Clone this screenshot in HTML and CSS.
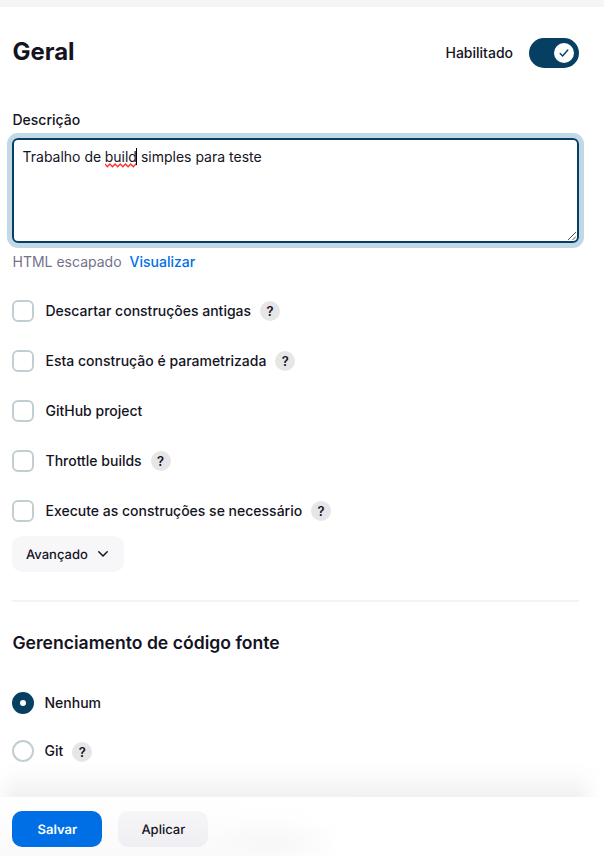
FILE: index.html
```html
<!DOCTYPE html>
<html lang="pt-BR">
<head>
<meta charset="utf-8">
<title>Geral</title>
<link rel="stylesheet" href="styles.css">
</head>
<body>
<main class="page">
  <header class="head">
    <h1>Geral</h1>
    <div class="toggle-label"><span>Habilitado</span>
      <span class="toggle"><span class="knob"><svg width="12" height="12" viewBox="0 0 12 12"><path d="M2.2 6.6 4.6 9 9.8 3" fill="none" stroke="#063f61" stroke-width="1.4" stroke-linecap="round" stroke-linejoin="round"/></svg></span></span>
    </div>
  </header>
  <div class="field-label">Descrição</div>
  <div class="textarea">Trabalho de <span class="misspelt">build<svg class="squiggle" width="32" height="5" viewBox="0 0 32 5"><path d="M0 1 2.3 3.8 4.9 1 7.5 3.8 10.1 1 12.7 3.8 15.3 1 17.9 3.8 20.5 1 23.1 3.8 25.7 1 28.3 3.8 30.9 1 32 2" fill="none" stroke="#ff3030" stroke-width="1.3"/></svg><i class="caret"></i></span> simples para teste
    <svg class="grip" width="8" height="8" viewBox="0 0 8 8"><path d="M0 8 8 0M4.5 8 8 4.5" fill="none" stroke="#555" stroke-width="1"/></svg>
  </div>
  <div class="preview"><span>HTML escapado</span><a>Visualizar</a></div>
  <div class="options">
    <div class="option"><span class="box"></span><span>Descartar construções antigas</span><span class="help">?</span></div>
    <div class="option"><span class="box"></span><span>Esta construção é parametrizada</span><span class="help">?</span></div>
    <div class="option"><span class="box"></span><span>GitHub project</span></div>
    <div class="option"><span class="box"></span><span>Throttle builds</span><span class="help">?</span></div>
    <div class="option"><span class="box"></span><span>Execute as construções se necessário</span><span class="help">?</span></div>
  </div>
  <div class="advanced"><span>Avançado</span><svg width="10" height="6" viewBox="0 0 10 6"><path d="M.8.8 5 5 9.2.8" fill="none" stroke="#14141f" stroke-width="1.5" stroke-linecap="round" stroke-linejoin="round"/></svg></div>
  <section class="scm">
    <h2>Gerenciamento de código fonte</h2>
    <div class="choice"><span class="radio checked"></span><span>Nenhum</span></div>
    <div class="choice"><span class="radio"></span><span>Git</span><span class="help low">?</span></div>
  </section>
</main>
<footer class="actions"><div class="btn save">Salvar</div><div class="btn apply">Aplicar</div></footer>
</body>
</html>
```
FILE: styles.css
```css
* { box-sizing: border-box; }
body {
  margin: 0;
  height: 856px;
  overflow: hidden;
  display: flex;
  flex-direction: column;
  background: #fff;
  color: #14141f;
  font: 500 14px/20px Inter, "Liberation Sans", sans-serif;
}
svg { display: block; }
.page { height: 797px; flex: none; padding: 0 25px 0 12px; border-top: 7px solid #f5f5f7; }
.head { display: flex; justify-content: space-between; align-items: center; height: 30px; margin-top: 31px; }
h1 { margin: 0; font-size: 24px; font-weight: 700; line-height: 28px; padding: 0 0 2px .4px; }
.toggle-label { display: flex; align-items: center; gap: 16px; }
.toggle { width: 50px; height: 30px; padding: 5px; border-radius: 15px; background: #063f61; display: flex; justify-content: flex-end; }
.knob { width: 20px; height: 20px; border-radius: 50%; background: #fff; display: flex; align-items: center; justify-content: center; }
.field-label { margin-top: 42px; padding-left: .5px; }
.textarea {
  position: relative;
  height: 105px;
  margin-top: 8px;
  padding: 7px 8.5px;
  border: 2px solid #063f61;
  border-radius: 6px;
  box-shadow: 0 0 0 5px #c1d8e6;
  font-weight: 400;
}
.misspelt { position: relative; margin-left: -.4px; }
.squiggle { position: absolute; left: 0; top: 15px; }
.caret { position: absolute; right: 0; top: 0; width: 1px; height: 17px; background: #000; }
.grip { position: absolute; right: 1px; bottom: 1px; }
.preview { display: flex; gap: 8px; margin-top: 9px; padding-left: .5px; font-weight: 400; color: #73738c; }
.preview a { font-weight: 500; color: #006fe6; }
.options { display: flex; flex-direction: column; gap: 28px; margin-top: 28px; }
.option { display: flex; align-items: center; height: 22px; }
.box { width: 22px; height: 22px; margin-right: 11.5px; border: 2px solid #c2ced2; border-radius: 6px; }
.help { width: 20px; height: 20px; margin-left: 9px; border-radius: 50%; background: #e6e6e6; font-size: 13px; font-weight: 600; text-align: center; }
.advanced { display: flex; align-items: center; gap: 10px; width: 112px; height: 36px; margin-top: 14px; padding-left: 14px; border-radius: 10px; background: #f7f7f9; font-size: 13px; text-rendering: geometricPrecision; }
.advanced span { padding-top: 1px; }
.scm { margin-top: 28px; border-top: 2px solid #f3f3f7; }
h2 { margin: 31px 0 39px; padding-left: .4px; font-size: 17.6px; font-weight: 600; line-height: 20px; }
.choice { display: flex; align-items: center; height: 22px; margin-bottom: 26px; }
.radio { width: 22px; height: 22px; margin-right: 10.5px; border: 2px solid #c2ced2; border-radius: 50%; }
.radio.checked { border: 8px solid #063f61; }
.low { position: relative; top: 1px; }
.actions { position: relative; height: 59px; flex: none; display: flex; gap: 16px; padding: 14px 12px; background: radial-gradient(ellipse 70px 24px at 270px 45px, #f7f7f7, transparent), linear-gradient(#fff, transparent), linear-gradient(90deg, #fafafa 200px, #fff 350px); }
.actions::before { content: ""; position: absolute; left: 0; right: 0; top: -35px; height: 35px; background: linear-gradient(90deg, rgba(255,255,255,.7), transparent 16px, transparent 576px, #fff 600px), linear-gradient(transparent, rgba(0,0,0,.015) 40%, rgba(0,0,0,.055)); }
.btn { width: 90px; height: 36px; padding-left: .6px; border-radius: 10px; font-size: 13px; line-height: 38px; text-align: center; text-rendering: geometricPrecision; }
.save { background: #006fe6; color: #fff; font-weight: 600; }
.apply { background: linear-gradient(#f6f6f8, #efeff3); }
```
